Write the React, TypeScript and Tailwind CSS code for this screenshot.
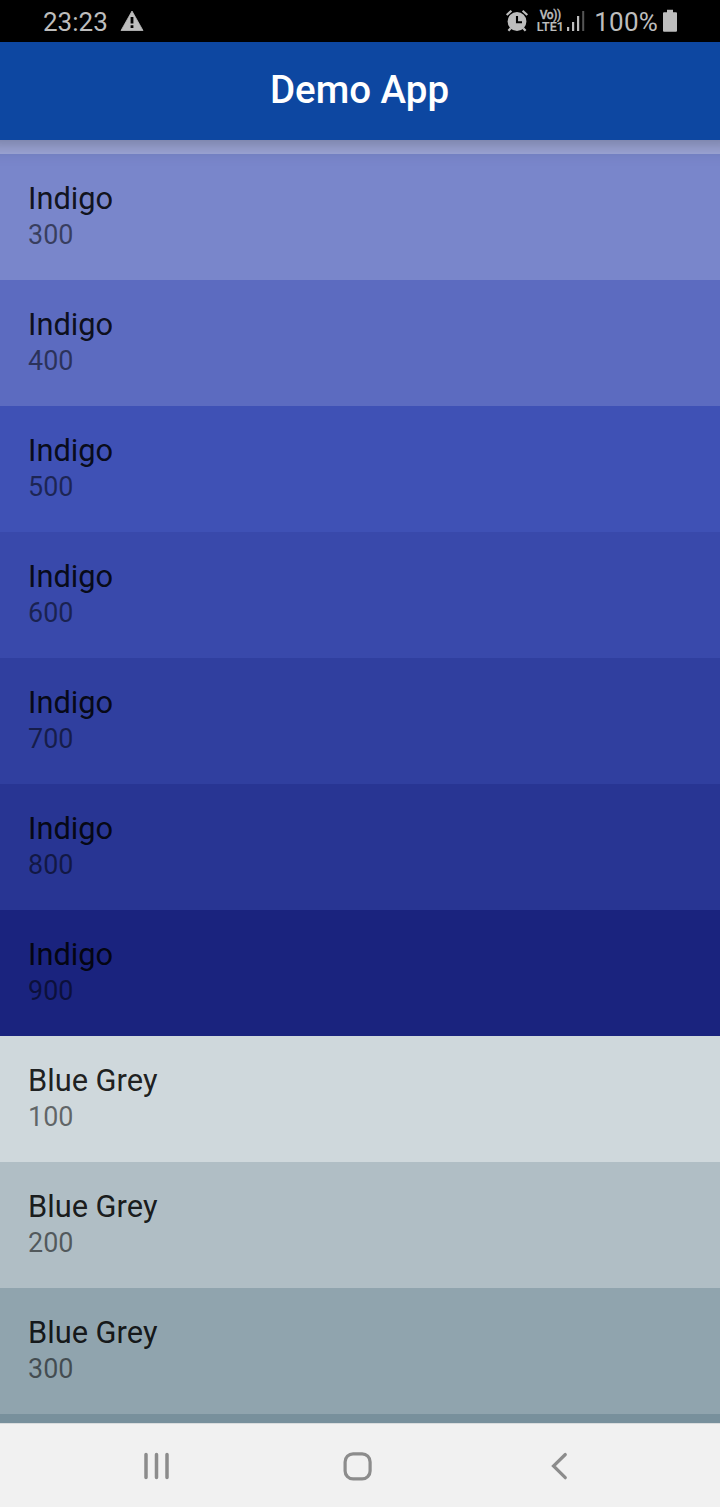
const swatches = [
  { name: 'Indigo', shade: 300, color: 'bg-[#7986cb]' },
  { name: 'Indigo', shade: 400, color: 'bg-[#5c6bc0]' },
  { name: 'Indigo', shade: 500, color: 'bg-[#3f51b5]' },
  { name: 'Indigo', shade: 600, color: 'bg-[#3949ab]' },
  { name: 'Indigo', shade: 700, color: 'bg-[#303f9f]' },
  { name: 'Indigo', shade: 800, color: 'bg-[#283593]' },
  { name: 'Indigo', shade: 900, color: 'bg-[#1a237e]' },
  { name: 'Blue Grey', shade: 100, color: 'bg-[#cfd8dc]' },
  { name: 'Blue Grey', shade: 200, color: 'bg-[#b0bec5]' },
  { name: 'Blue Grey', shade: 300, color: 'bg-[#90a4ae]' },
];

function StatusBar() {
  return (
    <header className="relative z-20 flex h-[42px] shrink-0 items-center bg-black pr-[42px] pl-[43px] text-[#bdbdbd]">
      <span className="mt-px text-[26px] leading-[30px]">23:23</span>
      <svg className="ml-[12px] h-[22px] w-[24px]" viewBox="0 0 24 22" fill="currentColor">
        <path d="M12 1 23 20.5H1Z" stroke="currentColor" strokeWidth="0.8" strokeLinejoin="round" />
        <path d="M10.6 7h2.8v6.5h-2.8zM10.6 15.2h2.8V18h-2.8z" fill="#000" />
      </svg>
      <div className="ml-auto flex items-center">
        <svg className="h-[24px] w-[24px]" viewBox="0 0 24 24" fill="none" stroke="currentColor">
          <circle cx="12" cy="12.5" r="9.4" fill="currentColor" stroke="none" />
          <path d="M1.7 6 6.4 1.8M17.6 1.8 22.3 6M5.7 19.2 3.4 21.8M18.3 19.2l2.3 2.6" strokeWidth="2.2" />
          <path d="M12 7v6.2h5" stroke="#000" strokeWidth="2.1" />
        </svg>
        <div className="ml-[7px] flex w-[28px] flex-col items-center font-medium">
          <span className="text-[12px] leading-[11px] tracking-[-0.4px] whitespace-nowrap [-webkit-text-stroke:0.3px]">Vo))</span>
          <span className="text-[12.5px] leading-[12px] [-webkit-text-stroke:0.2px]">LTE1</span>
        </div>
        <svg className="ml-[2px] h-[22px] w-[20px]" viewBox="0 0 20 22" fill="currentColor">
          <rect x="1" y="17" width="2.2" height="4" />
          <rect x="6" y="12" width="2.2" height="9" />
          <rect x="11" y="6" width="2.2" height="15" />
          <rect x="16.2" y="1" width="2" height="20" opacity="0.45" />
        </svg>
        <span className="mt-px ml-[8px] text-[26px] leading-[30px] tracking-[0.2px]">100%</span>
        <svg className="ml-[4px] h-[24px] w-[16px]" viewBox="0 0 16 24" fill="currentColor">
          <path d="M5 .7h6v2.5h3q1 0 1 1v17.5q0 1-1 1H2q-1 0-1-1V4.2q0-1 1-1h3z" />
        </svg>
      </div>
    </header>
  );
}

function NavigationBar() {
  return (
    <nav className="flex h-[84px] shrink-0 items-center border-t border-[#d9dcdd] bg-[#f1f1f1] pt-px pl-[140px] text-[#8c8c8c]">
      <svg className="h-8 w-8" viewBox="0 0 32 32" fill="none" stroke="currentColor" strokeWidth="3.5" strokeLinecap="round">
        <path d="M6 4.5v23M16.5 4.5v23M27 4.5v23" />
      </svg>
      <svg className="ml-[169px] h-8 w-8" viewBox="0 0 32 32" fill="none" stroke="currentColor" strokeWidth="3.2">
        <rect x="4.1" y="3.9" width="25" height="25" rx="8" />
      </svg>
      <svg className="ml-[170px] h-8 w-8" viewBox="0 0 32 32" fill="none" stroke="currentColor" strokeWidth="3.2" strokeLinecap="round">
        <path d="M22.3 4.5 10.5 16l11.8 11.7" />
      </svg>
    </nav>
  );
}

export default function App() {
  return (
    <div className="flex h-[1507px] w-[720px] flex-col overflow-hidden bg-white font-['Roboto',sans-serif]">
      <StatusBar />
      <div className="relative z-10 flex h-[98px] shrink-0 items-center justify-center bg-[#0d47a1] pr-px pb-[2px] shadow-[0_-15px_18px_20px_rgba(0,0,0,0.27)]">
        <h1 className="text-[38.5px] leading-[46px] font-medium text-white">Demo App</h1>
      </div>
      <main className="min-h-0 flex-1 overflow-hidden">
        <div className="h-[14px] bg-[#9fa8da]" />
        {swatches.map(({ name, shade, color }) => (
          <div key={`${name}-${shade}`} className={`flex h-[126px] flex-col justify-center pb-[2px] pl-[28px] ${color}`}>
            <p className="text-[30.8px] leading-[38px] text-black/87">{name}</p>
            <p className="text-[26.95px] leading-[34px] text-black/54">{shade}</p>
          </div>
        ))}
        <div className="h-[126px] bg-[#78909c]" />
      </main>
      <NavigationBar />
    </div>
  );
}
